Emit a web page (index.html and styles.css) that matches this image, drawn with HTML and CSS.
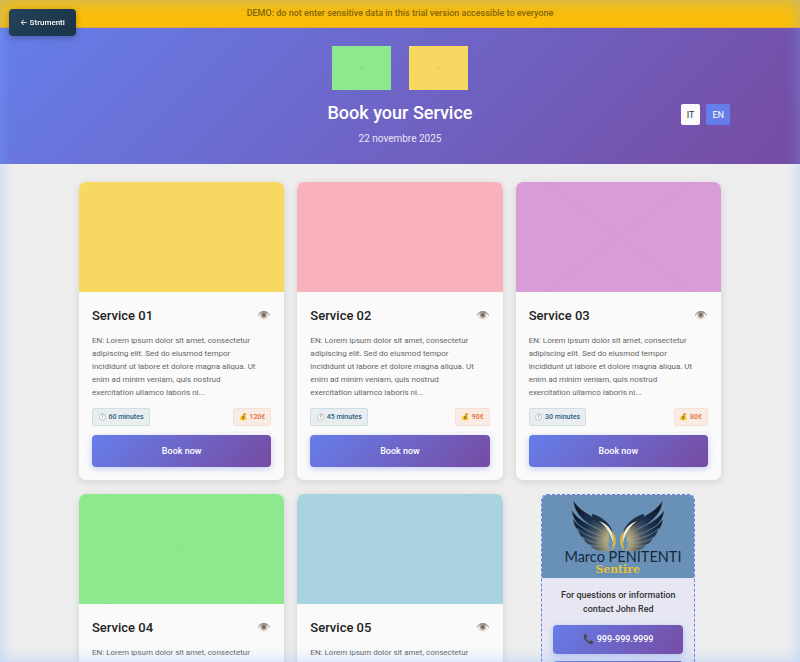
FILE: index.html
```html
<!DOCTYPE html>
<html lang="en">
<head>
    <meta charset="UTF-8">
    <meta name="viewport" content="width=device-width, initial-scale=1.0">
    <title>Book your Service</title>
    <link rel="stylesheet" href="styles.css">
</head>
<body>
    <div class="edge-glow"></div>
    <a href="#" class="back-link">← Strumenti</a>

    <div class="demo-banner">DEMO: do not enter sensitive data in this trial version accessible to everyone</div>

    <header class="header">
        <div class="logos">
            <svg class="logo green" viewBox="0 0 400 300"><path d="M190 150h20M200 146v8"/></svg>
            <svg class="logo yellow" viewBox="0 0 400 300"><path d="M190 150h20M200 146v8"/></svg>
        </div>
        <div class="heading">
            <h1>Book your Service</h1>
            <p class="date">22 novembre 2025</p>
        </div>
        <div class="lang">
            <button type="button">IT</button>
            <button type="button" class="active">EN</button>
        </div>
    </header>

    <main class="services">
        <article class="card">
            <svg class="cover yellow" viewBox="0 0 400 300" preserveAspectRatio="xMidYMid slice"><path d="M0 0L400 300M400 0L0 300"/></svg>
            <div class="card-body">
                <div class="card-title"><h2>Service 01</h2><button type="button" class="eye" aria-label="Details">👁️</button></div>
                <p class="desc">EN: Lorem ipsum dolor sit amet, consectetur adipiscing elit. Sed do eiusmod tempor incididunt ut labore et dolore magna aliqua. Ut enim ad minim veniam, quis nostrud exercitation ullamco laboris ni...</p>
                <div class="meta"><span class="time">⏱️ 60 minutes</span><span class="price">💰 120€</span></div>
                <button type="button" class="book">Book now</button>
            </div>
        </article>

        <article class="card">
            <svg class="cover pink" viewBox="0 0 400 300" preserveAspectRatio="xMidYMid slice"><path d="M0 0L400 300M400 0L0 300"/></svg>
            <div class="card-body">
                <div class="card-title"><h2>Service 02</h2><button type="button" class="eye" aria-label="Details">👁️</button></div>
                <p class="desc">EN: Lorem ipsum dolor sit amet, consectetur adipiscing elit. Sed do eiusmod tempor incididunt ut labore et dolore magna aliqua. Ut enim ad minim veniam, quis nostrud exercitation ullamco laboris ni...</p>
                <div class="meta"><span class="time">⏱️ 45 minutes</span><span class="price">💰 90€</span></div>
                <button type="button" class="book">Book now</button>
            </div>
        </article>

        <article class="card">
            <svg class="cover plum" viewBox="0 0 400 300" preserveAspectRatio="xMidYMid slice"><path d="M0 0L400 300M400 0L0 300"/></svg>
            <div class="card-body">
                <div class="card-title"><h2>Service 03</h2><button type="button" class="eye" aria-label="Details">👁️</button></div>
                <p class="desc">EN: Lorem ipsum dolor sit amet, consectetur adipiscing elit. Sed do eiusmod tempor incididunt ut labore et dolore magna aliqua. Ut enim ad minim veniam, quis nostrud exercitation ullamco laboris ni...</p>
                <div class="meta"><span class="time">⏱️ 30 minutes</span><span class="price">💰 80€</span></div>
                <button type="button" class="book">Book now</button>
            </div>
        </article>

        <article class="card">
            <svg class="cover green" viewBox="0 0 400 300" preserveAspectRatio="xMidYMid slice"><path d="M0 0L400 300M400 0L0 300"/></svg>
            <div class="card-body">
                <div class="card-title"><h2>Service 04</h2><button type="button" class="eye" aria-label="Details">👁️</button></div>
                <p class="desc">EN: Lorem ipsum dolor sit amet, consectetur adipiscing elit. Sed do eiusmod tempor</p>
            </div>
        </article>

        <article class="card">
            <svg class="cover blue" viewBox="0 0 400 300" preserveAspectRatio="xMidYMid slice"><path d="M0 0L400 300M400 0L0 300"/></svg>
            <div class="card-body">
                <div class="card-title"><h2>Service 05</h2><button type="button" class="eye" aria-label="Details">👁️</button></div>
                <p class="desc">EN: Lorem ipsum dolor sit amet, consectetur adipiscing elit. Sed do eiusmod tempor</p>
            </div>
        </article>

        <aside class="contact">
            <svg class="brand" viewBox="35 27 460 250">
                <defs>
                    <radialGradient id="wing" gradientUnits="userSpaceOnUse" cx="250" cy="165" r="140">
                        <stop offset="0" stop-color="#f0d060"/>
                        <stop offset="0.2" stop-color="#b0a070"/>
                        <stop offset="0.42" stop-color="#4b5560"/>
                        <stop offset="0.65" stop-color="#1b3350"/>
                        <stop offset="1" stop-color="#0e1c30"/>
                    </radialGradient>
                    <!-- left wing, mirrored for the right one -->
                    <g id="half">
                        <path class="feather" d="M130 40C138 62 160 76 188 92C218 110 236 130 240 160C218 140 186 126 162 104C142 86 129 66 130 40Z"/>
                        <path class="feather" d="M124 70C138 96 168 112 198 126C222 138 236 150 240 170C216 152 182 144 156 126C138 114 126 94 124 70Z"/>
                        <path class="feather" d="M128 98C146 124 178 138 206 148C224 156 234 164 238 176C212 164 182 162 158 148C140 136 130 120 128 98Z"/>
                        <path class="feather" d="M142 128C160 148 190 156 212 162C226 168 234 174 238 182C214 176 190 178 168 166C154 158 146 146 142 128Z"/>
                        <path class="feather" d="M158 154C176 170 198 170 216 174C230 176 236 182 240 188C218 188 202 190 182 180C168 174 162 166 158 154Z"/>
                        <path class="feather" d="M178 178C196 186 214 182 228 186C238 188 242 190 244 194C222 200 196 200 178 178Z"/>
                        <path fill="#1c3048" d="M186 84C222 94 250 120 253 158C242 132 212 116 196 106C190 101 186 93 186 84Z"/>
                        <path fill="#f4ecc8" d="M206 106C240 116 254 142 250 172C244 146 230 122 206 106Z"/>
                        <path fill="#dcb83c" d="M244 134C264 154 262 180 246 196C251 176 252 154 244 134Z"/>
                    </g>
                </defs>
                <use href="#half"/>
                <use href="#half" transform="translate(530 0) scale(-1 1)"/>
                <text class="brand-name" x="280" y="230" text-anchor="middle">Marco PENITENTI</text>
                <text class="brand-sub" x="264" y="262" text-anchor="middle">Sentire</text>
            </svg>
            <div class="contact-body">
                <p>For questions or information contact John Red</p>
                <a href="tel:9999999999">📞 999-999.9999</a>
                <a href="#" aria-label="Email"></a>
            </div>
        </aside>
    </main>
</body>
</html>
```

FILE: styles.css
```css
* { box-sizing: border-box; margin: 0; padding: 0; }
body { font-family: Roboto, Inter, "Noto Color Emoji", sans-serif; background-color: #eeeeee; color: #222; }
button { font-family: inherit; border: none; cursor: pointer; }
a { text-decoration: none; }

.edge-glow {
    position: fixed; inset: 0; z-index: 10; pointer-events: none;
    box-shadow: inset 0 0 16px rgba(120, 175, 255, 0.45);
}
.back-link {
    position: fixed; top: 9px; left: 9px; z-index: 11;
    padding: 0 11px; line-height: 27px; border-radius: 4px;
    background: linear-gradient(135deg, #23425a, #1a3448); color: #fff;
    font-size: 8px; font-weight: 500; box-shadow: 0 2px 6px rgba(0, 0, 0, 0.25);
}

.demo-banner {
    height: 28px; line-height: 27px; text-align: center; background: #fabd0a; color: #856404;
    border-bottom: 1px solid #e0a535; font-size: 9px; font-weight: 500;
}

.header {
    display: grid; grid-template-columns: 1fr auto 1fr; row-gap: 14px; padding: 18px 70px;
    background: linear-gradient(135deg, #667eea 0%, #764ba2 100%); color: #fff;
}
.logos { grid-column: 1 / 4; display: flex; justify-content: center; gap: 18px; }
.logo { width: 59px; height: 44px; }
.logo path { stroke: rgba(0, 0, 0, 0.12); stroke-width: 5; }
.heading { grid-column: 2; text-align: center; }
h1 { font-size: 18px; line-height: 18px; font-weight: 500; }
.date { margin-top: 10px; font-size: 10px; line-height: 14px; color: #e8e4f6; }
.lang { display: flex; gap: 6px; justify-self: end; align-self: start; }
.lang button { height: 21px; padding: 0 6px; border-radius: 2px; background: #fafafa; color: #333; font-size: 9px; }
.lang .active { background: #667eea; color: #fff; }

.services {
    display: grid; grid-template-columns: repeat(3, 1fr); gap: 14px 13px; align-items: start;
    max-width: 1200px; margin: 0 auto; padding: 18px 79px;
}
.card { background: #fafafa; border-radius: 7px; overflow: hidden; box-shadow: 0 2px 8px rgba(0, 0, 0, 0.12); }
.cover { display: block; width: 100%; height: 110px; }
.cover path { stroke: rgba(0, 0, 0, 0.06); stroke-width: 1; }
.yellow { background: #f7d860; }
.green { background: #8ee88e; }
.pink { background: #f9b1bc; }
.plum { background: #d89cd8; }
.blue { background: #a9d3e0; }

.card-body { display: flex; flex-direction: column; gap: 9px; padding: 13px; }
.card-title { display: flex; justify-content: space-between; align-items: center; height: 20px; }
h2 { font-size: 13px; font-weight: 500; }
.eye { background: none; font-size: 11px; opacity: 0.7; }
.desc { padding-right: 8px; font-size: 8px; line-height: 13px; color: #666; }
.meta { display: flex; justify-content: space-between; }
.meta span { padding: 0 5px; line-height: 16px; font-size: 7px; font-weight: 500; border-width: 1px; border-style: solid; border-radius: 2px; }
.time { background: #e8edef; border-color: #d0dde2; color: #2c5f7d; }
.price { background: #f9ece5; border-color: #f6dfd3; color: #ea6a35; }
.book, .contact a {
    border-radius: 4px; background: linear-gradient(135deg, #667eea 0%, #764ba2 100%);
    color: #fff; font-size: 9px; font-weight: 500; text-align: center;
    box-shadow: 0 2px 6px rgba(102, 126, 234, 0.35);
}
.book { height: 32px; }

.contact {
    justify-self: center; width: 75%; overflow: hidden;
    background: #e6e7f2; border: 1px dashed #667eea; border-radius: 6px;
}
.brand { display: block; width: 100%; background: #6991b8; }
.feather { fill: url(#wing); stroke: #7d98b0; stroke-width: 2; }
.brand-name { font-family: Lato, sans-serif; font-size: 44px; fill: #17273a; }
.brand-sub { font-family: "DejaVu Serif", serif; font-size: 33px; font-weight: bold; fill: #e6c235; }
.contact-body { display: flex; flex-direction: column; gap: 7px; padding: 10px 11px; }
.contact p { padding-bottom: 2px; text-align: center; font-size: 9px; line-height: 14px; font-weight: 500; color: #333; }
.contact a { min-height: 29px; line-height: 29px; }
```
